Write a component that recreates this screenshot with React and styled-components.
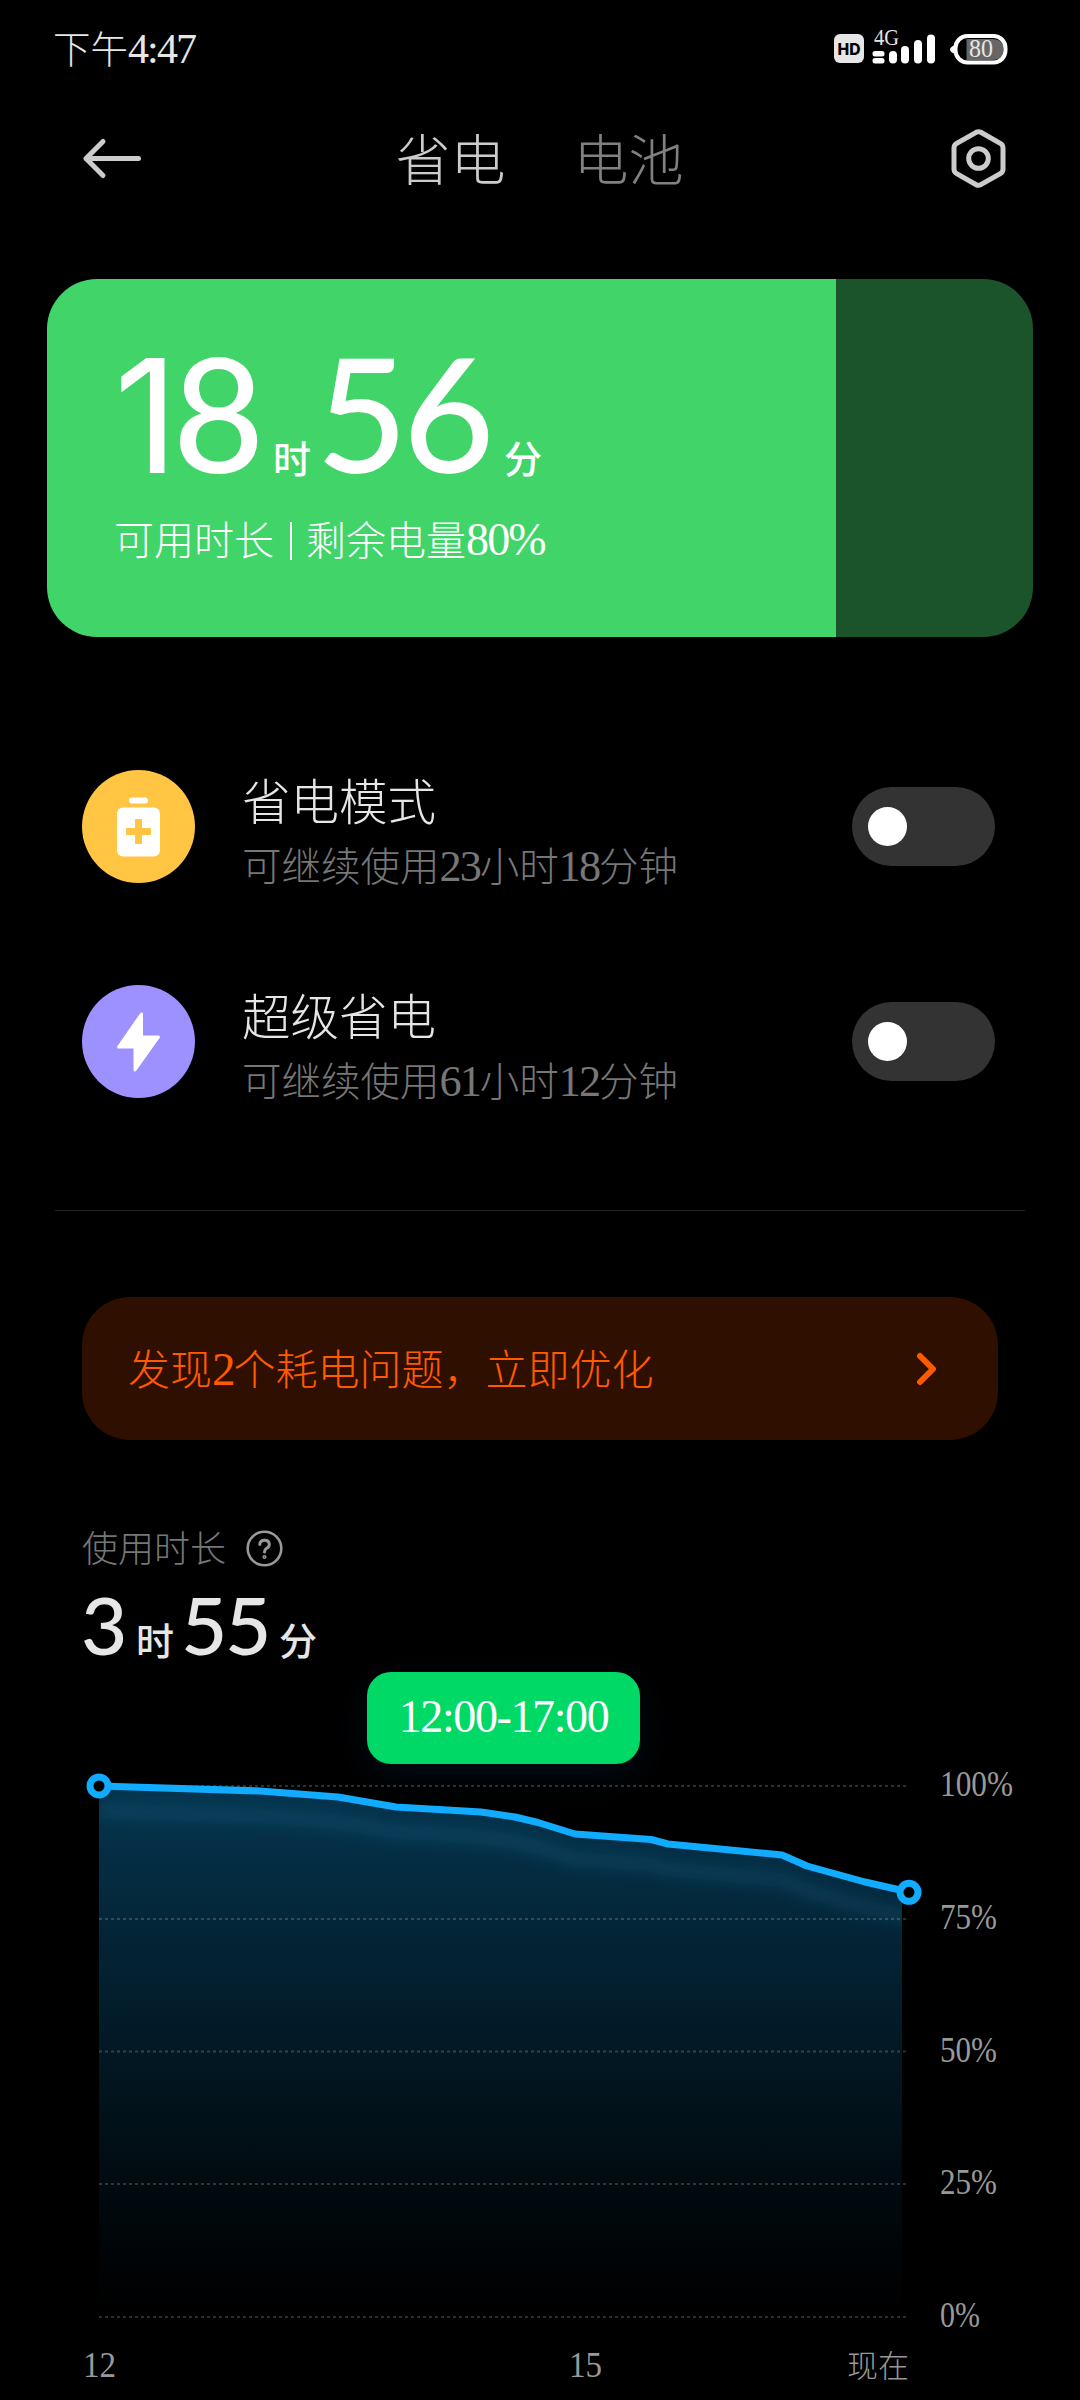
import React, { useState } from 'react';
import styled, { createGlobalStyle } from 'styled-components';

const GlobalStyle = createGlobalStyle`
  * {
    box-sizing: border-box;
  }

  body {
    margin: 0;
    background: #000;
    font-family: 'Liberation Serif', 'Noto Sans CJK SC', serif;
    font-weight: 300;
  }
`;

// Styled Components
const Screen = styled.div`
  width: 1080px;
  height: 2400px;
  overflow: hidden;
  background: #000;
  color: #e6e6e6;
`;

const Num = styled.span`
  font-size: ${(props) => props.$size || '1.12em'};
  letter-spacing: ${(props) => props.$spacing || '-0.045em'};
`;

const StatusBar = styled.div`
  height: 98px;
  padding: 0 72px 0 53px;
  display: flex;
  justify-content: space-between;
  align-items: flex-start;
`;

const Clock = styled.div`
  padding-top: 25px;
  font-size: 37.5px;
  line-height: 48px;
  white-space: nowrap;
`;

const Header = styled.div`
  height: 121px;
  padding: 0 72px 0 80px;
  display: flex;
  align-items: center;
  justify-content: space-between;
`;

const Tabs = styled.div`
  display: flex;
  gap: 68px;
  padding: 6px 14px 0 0;
`;

const Tab = styled.div`
  font-size: 55px;
  line-height: 72px;
  color: ${(props) => (props.$active ? '#ccc' : '#808080')};
  cursor: pointer;
`;

const BatteryCard = styled.div`
  margin: 60px 47px 0;
  height: 358px;
  padding: 54px 0 0 67px;
  border-radius: 50px;
  background: linear-gradient(to right, #41d469 80%, #1b542a 80%);
  color: #fff;
`;

const Duration = styled.div`
  display: flex;
  align-items: baseline;
  font-family: Lato, 'Noto Sans CJK SC', sans-serif;
  font-weight: 500;
  line-height: 1;
  height: ${(props) => (props.$large ? '160px' : '80px')};
  margin-left: ${(props) => (props.$large ? '0' : '81px')};
`;

const BigDigits = styled.span`
  font-size: ${(props) => (props.$large ? '158px' : '80px')};
  letter-spacing: -0.03em;
  width: ${(props) => props.$width}px;
  white-space: nowrap;
`;

// Lato's 1 has a foot, Inter's has not
const PlainOne = styled.span`
  font-family: Inter, sans-serif;
  font-weight: 400;
  letter-spacing: -0.035em;
`;

const Unit = styled.span`
  font-family: 'Noto Sans CJK SC', sans-serif;
  font-size: 38px;
  width: ${(props) => props.$width}px;
`;

const CardCaption = styled.div`
  margin-top: 19px;
  font-size: 40px;
  line-height: 56px;
  white-space: nowrap;
`;

const CaptionBar = styled.span`
  display: inline-block;
  width: 2px;
  height: 38px;
  margin: 0 14px 0 16px;
  background: #fff;
  vertical-align: -5px;
`;

const ModeList = styled.div`
  margin: 133px 85px 0 82px;
  display: flex;
  flex-direction: column;
  gap: 102px;
`;

const ModeRow = styled.div`
  height: 113px;
  display: flex;
  align-items: center;
`;

const ModeIcon = styled.div`
  width: 113px;
  height: 113px;
  border-radius: 50%;
  background: ${(props) => props.$color};
  display: flex;
  align-items: center;
  justify-content: center;
`;

const ModeText = styled.div`
  flex: 1;
  padding: 17px 0 0 47px;
`;

const ModeTitle = styled.div`
  font-size: 48.5px;
  line-height: 64px;
`;

const ModeDetail = styled.div`
  font-size: 39.5px;
  line-height: 62px;
  color: #777;
  white-space: nowrap;
`;

const Toggle = styled.button`
  width: 143px;
  height: 79px;
  padding: 0 16px;
  border: none;
  border-radius: 40px;
  background: ${(props) => (props.$on ? '#41d469' : '#333')};
  display: flex;
  align-items: center;
  justify-content: ${(props) => (props.$on ? 'flex-end' : 'flex-start')};
  cursor: pointer;
`;

const Knob = styled.span`
  width: 39px;
  height: 39px;
  border-radius: 50%;
  background: #fff;
`;

const Divider = styled.div`
  height: 1px;
  margin: 112px 55px 0;
  background: #242424;
`;

const Banner = styled.div`
  margin: 86px 82px 0;
  height: 143px;
  padding: 0 60px 0 46px;
  border-radius: 48px;
  background: #2e0f00;
  color: #ff5a00;
  font-size: 42px;
  display: flex;
  align-items: center;
  justify-content: space-between;
`;

const BannerText = styled.span`
  padding-bottom: 4px;
`;

const UsageHead = styled.div`
  margin: 90px 0 0 82px;
  height: 36px;
  display: flex;
  align-items: center;
  gap: 20px;
  font-size: 36px;
  line-height: 36px;
  color: #777;
`;

const UsageLabel = styled.span`
  padding-top: 4px;
`;

const UsageValue = styled.div`
  height: 94px;
  padding-top: 18px;
`;

const ChartArea = styled.div`
  position: relative;
  height: 740px;
`;

const RangeTip = styled.div`
  position: absolute;
  top: 12px;
  left: 367px;
  width: 273px;
  height: 92px;
  padding-bottom: 3px;
  border-radius: 24px;
  background: #00d966;
  box-shadow: 0 10px 36px rgba(17, 110, 190, 0.12);
  color: #fff;
  font-size: 46px;
  letter-spacing: -1.4px;
  display: flex;
  align-items: center;
  justify-content: center;
`;

const StatusIcons = () => (
  <svg width="180" height="80" viewBox="828 0 180 80">
    <rect x="834" y="34" width="30" height="29" rx="6" fill="#e6e6e6" />
    <text x="837.5" y="54.5" fontFamily="Inter, sans-serif" fontWeight="800" fontSize="16" textLength="23" lengthAdjust="spacingAndGlyphs" fill="#000">HD</text>
    <text x="874" y="45" fontSize="24" textLength="25" lengthAdjust="spacingAndGlyphs" fill="#e6e6e6">4G</text>
    <g fill="#fff">
      <rect x="872.5" y="51" width="12" height="5.5" rx="2.5" />
      <rect x="872.5" y="58" width="12" height="5.5" rx="2.5" />
      <rect x="889" y="51" width="8" height="12.5" rx="4" />
      <rect x="901" y="46" width="8" height="17.5" rx="4" />
      <rect x="914" y="40" width="8" height="23.5" rx="4" />
      <rect x="927" y="34.5" width="8" height="29" rx="4" />
      <path d="M955 45 Q950 47 950 49.5 Q950 52 955 54 Z" />
    </g>
    <path d="M966.5 39 H992 Q1003.5 39 1003.5 49 Q1003.5 60 992 60 H966.5 Z" fill="#666" />
    <rect x="955.5" y="36" width="50" height="26.5" rx="12" fill="none" stroke="#fff" strokeWidth="4" />
    <text x="969" y="57" fontSize="25" textLength="24" lengthAdjust="spacingAndGlyphs" fill="#e6e6e6">80</text>
  </svg>
);

const BackIcon = () => (
  <svg width="64" height="50" viewBox="0 0 64 50" fill="none" stroke="#ccc" strokeWidth="5" strokeLinecap="round" strokeLinejoin="round">
    <path d="M58.5 24.5 H6 M23 7.5 L6 24.5 L23 41.5" />
  </svg>
);

const SettingsIcon = () => (
  <svg width="59" height="62" viewBox="0 0 59 62" fill="none" stroke="#ccc" strokeWidth="5">
    <path
      d="M27.2 4.3 Q29.5 3 31.8 4.3 L51.3 15.4 Q54 17 54 20 V41 Q54 44 51.3 45.6 L31.8 56.7 Q29.5 58 27.2 56.7 L7.7 45.6 Q5 44 5 41 V20 Q5 17 7.7 15.4 Z"
      strokeLinejoin="round"
    />
    <circle cx="29.5" cy="30.5" r="9.8" />
  </svg>
);

const BatteryPlusIcon = () => (
  <svg width="43" height="60" viewBox="0 0 43 60">
    <rect x="12" y="0.5" width="19" height="6" rx="3" fill="#fff" />
    <rect x="0" y="10.5" width="43" height="49" rx="6" fill="#fff" />
    <path d="M18.5 22.5 h6 v9 h9 v6 h-9 v9 h-6 v-9 h-9 v-6 h9 Z" fill="#ffc543" stroke="#ffc543" strokeLinejoin="round" />
  </svg>
);

const BoltIcon = () => (
  <svg width="43" height="60" viewBox="0 0 43 60">
    <path d="M24.5 2 V25 H41.5 L18 58 V35 H1.5 Z" fill="#fff" stroke="#fff" strokeWidth="3" strokeLinejoin="round" />
  </svg>
);

const HelpIcon = () => (
  <svg width="37" height="37" viewBox="0 0 37 37" fill="none" stroke="#999" strokeWidth="2.6" strokeLinecap="round">
    <circle cx="18.5" cy="18.5" r="16.8" />
    <path d="M13.8 14.4 Q14 10.2 18.5 10.2 Q23.3 10.2 23.3 14.4 Q23.3 16.8 20.6 18.3 Q18.5 19.6 18.5 22" strokeWidth="3" />
    <circle cx="18.5" cy="27" r="0.8" />
  </svg>
);

const levelLine = 'M99 126 L260 131 L338 137 L396 147 L481 152 L515 157 L538 162.5 L575 174 L651 179.5 L668 184 L782 195 L807 206 L865 222 L909 232';
const levelArea = 'M99 126 L260 131 L338 137 L396 147 L481 152 L515 157 L538 162.5 L575 174 L651 179.5 L668 184 L782 195 L807 206 L865 222 L902 230 V657 H99 Z';

const gridLines = [
  { y: 126, label: '100%', width: 73 },
  { y: 259, label: '75%', width: 57 },
  { y: 391.5, label: '50%', width: 57 },
  { y: 524, label: '25%', width: 57 },
  { y: 657, label: '0%', width: 40 },
];

const BatteryChart = () => (
  <svg width="1080" height="740" viewBox="0 0 1080 740">
    <defs>
      <linearGradient id="areaFill" gradientUnits="userSpaceOnUse" x1="0" y1="126" x2="0" y2="657">
        <stop offset="0" stopColor="#11abff" stopOpacity="0.31" />
        <stop offset="0.5" stopColor="#11abff" stopOpacity="0.14" />
        <stop offset="0.85" stopColor="#11abff" stopOpacity="0.03" />
        <stop offset="1" stopColor="#11abff" stopOpacity="0" />
      </linearGradient>
      <filter id="lineGlow" filterUnits="userSpaceOnUse" x="60" y="100" width="900" height="240">
        <feGaussianBlur stdDeviation="7" />
      </filter>
      <clipPath id="areaClip">
        <path d={levelArea} />
      </clipPath>
    </defs>
    <path d={levelArea} fill="url(#areaFill)" />
    <g clipPath="url(#areaClip)">
      <path d={levelLine} transform="translate(0 25)" fill="none" stroke="#2b8cc4" strokeOpacity="0.17" strokeWidth="14" filter="url(#lineGlow)" />
    </g>
    {gridLines.map((line) => (
      <React.Fragment key={line.label}>
        <path d={`M99 ${line.y} H906`} stroke="#fff" strokeOpacity="0.18" strokeWidth="2" strokeDasharray="3 3" />
        <text x="940" y={line.y + 10} fontSize="36" textLength={line.width} lengthAdjust="spacingAndGlyphs" fill="#999">
          {line.label}
        </text>
      </React.Fragment>
    ))}
    <path d={levelLine} fill="none" stroke="#11abff" strokeWidth="7" strokeLinejoin="round" />
    <circle cx="99" cy="126" r="9" fill="#000" stroke="#11abff" strokeWidth="7" />
    <circle cx="909" cy="232.3" r="9" fill="#000" stroke="#11abff" strokeWidth="7" />
    <g fontSize="36" fill="#999">
      <text x="83" y="717" textLength="33" lengthAdjust="spacingAndGlyphs">12</text>
      <text x="569" y="717" textLength="33" lengthAdjust="spacingAndGlyphs">15</text>
      <text x="847" y="717" fontSize="31">现在</text>
    </g>
  </svg>
);

// Main Component
const App = () => {
  const [tab, setTab] = useState('saver');
  const [saver, setSaver] = useState(false);
  const [ultra, setUltra] = useState(false);

  return (
    <Screen lang="zh-CN">
      <GlobalStyle />
      <StatusBar>
        <Clock>下午<Num>4:47</Num></Clock>
        <StatusIcons />
      </StatusBar>
      <Header>
        <BackIcon />
        <Tabs>
          <Tab $active={tab === 'saver'} onClick={() => setTab('saver')}>省电</Tab>
          <Tab $active={tab === 'battery'} onClick={() => setTab('battery')}>电池</Tab>
        </Tabs>
        <SettingsIcon />
      </Header>

      <BatteryCard>
        <Duration $large>
          <BigDigits $large $width={159}><PlainOne>1</PlainOne>8</BigDigits>
          <Unit $width={43}>时</Unit>
          <BigDigits $large $width={188}>56</BigDigits>
          <Unit>分</Unit>
        </Duration>
        <CardCaption>可用时长<CaptionBar />剩余电量<Num $size="1.15em" $spacing="-0.04em">80%</Num></CardCaption>
      </BatteryCard>

      <ModeList>
        <ModeRow>
          <ModeIcon $color="#ffc543"><BatteryPlusIcon /></ModeIcon>
          <ModeText>
            <ModeTitle>省电模式</ModeTitle>
            <ModeDetail>可继续使用<Num>23</Num>小时<Num>18</Num>分钟</ModeDetail>
          </ModeText>
          <Toggle $on={saver} onClick={() => setSaver(!saver)}><Knob /></Toggle>
        </ModeRow>
        <ModeRow>
          <ModeIcon $color="#9c91ff"><BoltIcon /></ModeIcon>
          <ModeText>
            <ModeTitle>超级省电</ModeTitle>
            <ModeDetail>可继续使用<Num>61</Num>小时<Num>12</Num>分钟</ModeDetail>
          </ModeText>
          <Toggle $on={ultra} onClick={() => setUltra(!ultra)}><Knob /></Toggle>
        </ModeRow>
      </ModeList>

      <Divider />

      <Banner>
        <BannerText>发现<Num>2</Num>个耗电问题，立即优化</BannerText>
        <svg width="22" height="34" viewBox="0 0 22 34" fill="none" stroke="#ff5a00" strokeWidth="6" strokeLinecap="round" strokeLinejoin="round">
          <path d="M4 4 L17 17 L4 30" />
        </svg>
      </Banner>

      <UsageHead>
        <UsageLabel>使用时长</UsageLabel>
        <HelpIcon />
      </UsageHead>
      <UsageValue>
        <Duration>
          <BigDigits $width={55}>3</BigDigits>
          <Unit $width={45}>时</Unit>
          <BigDigits $width={98}>55</BigDigits>
          <Unit>分</Unit>
        </Duration>
      </UsageValue>

      <ChartArea>
        <BatteryChart />
        <RangeTip>12:00-17:00</RangeTip>
      </ChartArea>
    </Screen>
  );
};

export default App;
